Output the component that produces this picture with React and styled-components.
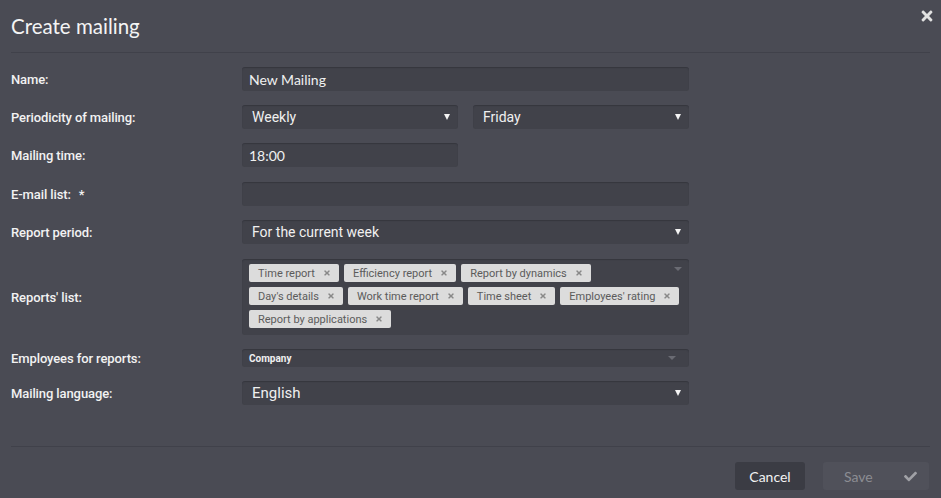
import React from 'react'
import styled, { createGlobalStyle } from 'styled-components'
import { FaTimes, FaCheck } from 'react-icons/fa'

const GlobalStyle = createGlobalStyle`
  html, body {
    margin: 0;
    padding: 0;
    background: #4a4b54;
  }
`

const Modal = styled.div`
  width: 941px;
  height: 498px;
  box-sizing: border-box;
  background: #4a4b54;
  color: #f0f0f0;
  font-family: Roboto, "Liberation Sans", sans-serif;
  padding: 0 11px;
  display: flex;
  flex-direction: column;
  position: relative;
`

const Header = styled.div`
  height: 52px;
  border-bottom: 1px solid #40414a;
  display: flex;
  align-items: center;
`

const Title = styled.h2`
  margin: 0;
  font-family: Lato, "Liberation Sans", sans-serif;
  font-weight: 400;
  font-size: 20.5px;
  color: #f4f4f4;
`

const Close = styled.button`
  position: absolute;
  top: 8px;
  right: 6px;
  background: none;
  border: none;
  padding: 0;
  color: #e2e2e2;
  font-size: 16px;
  display: flex;
`

const Form = styled.div`
  padding-top: 14px;
  display: flex;
  flex-direction: column;
  gap: 14px;
  flex: 1;
  border-bottom: 1px solid #40414a;
`

const Row = styled.div`
  display: grid;
  grid-template-columns: 231px 447px;
  align-items: center;
  margin-top: ${p => p.$mt || 0}px;
`

const Label = styled.div`
  font-size: 13px;
  font-weight: 500;
  color: #f2f2f2;
  letter-spacing: -0.1px;
`

const Star = styled.span`
  margin-left: 8px;
`

const Field = styled.div`
  box-sizing: border-box;
  height: ${p => p.$h || 24}px;
  width: ${p => (p.$w ? `${p.$w}px` : '100%')};
  background: #41424a;
  border-radius: 3px;
  box-shadow: inset 0 1px 1px #36373e;
  display: flex;
  align-items: center;
  padding: 0 7px 0 ${p => p.$pl || 7}px;
  font-family: ${p => (p.$lato ? 'Lato, "Liberation Sans", sans-serif' : 'Roboto, "Liberation Sans", sans-serif')};
  font-size: ${p => p.$fs || 14}px;
  font-weight: ${p => p.$fw || 400};
  color: #f0f0f0;
`

const Value = styled.span`
  flex: 1;
`

const Arrow = styled.span`
  width: 0;
  height: 0;
  border-left: 3.5px solid transparent;
  border-right: 3.5px solid transparent;
  border-top: 6px solid #f4f4f4;
  margin-right: 1px;
`

const DimArrow = styled.span`
  width: 0;
  height: 0;
  border-left: 4px solid transparent;
  border-right: 4px solid transparent;
  border-top: 4px solid #6a6b73;
  margin-right: 6px;
  ${p => p.$over && `
    position: absolute;
    top: 8px;
    right: 7px;
    margin: 0;
  `}
`

const Pair = styled.div`
  display: flex;
  gap: 15px;
`

const TagBox = styled.div`
  position: relative;
  box-sizing: border-box;
  height: 76px;
  background: #41424a;
  border-radius: 3px;
  box-shadow: inset 0 1px 1px #36373e;
  padding: 5px 7px 0 7px;
`

const Tags = styled.div`
  display: flex;
  flex-wrap: wrap;
  align-content: flex-start;
  column-gap: 5px;
  row-gap: 5px;
`

const Tag = styled.span`
  box-sizing: border-box;
  height: 18px;
  display: inline-flex;
  align-items: center;
  gap: 8px;
  padding: 0 8px 0 9px;
  background: #dcdcdc;
  border-radius: 2px;
  color: #5b5b5b;
  font-size: 11px;
  white-space: nowrap;
`

const TagX = styled(FaTimes)`
  font-size: 8px;
  color: #888;
`

const Footer = styled.div`
  height: 51px;
  box-sizing: border-box;
  display: flex;
  justify-content: flex-end;
  align-items: flex-start;
  padding: 15px 1px 0 0;
  gap: 18px;
`

const Button = styled.button`
  box-sizing: border-box;
  height: 28px;
  width: ${p => p.$w}px;
  border: none;
  border-radius: 3px;
  background: ${p => (p.$disabled ? '#50515a' : '#3b3c44')};
  color: ${p => (p.$disabled ? '#8c8d93' : '#f2f2f2')};
  font-family: Lato, "Liberation Sans", sans-serif;
  font-size: 14px;
  display: flex;
  align-items: center;
  justify-content: ${p => (p.$disabled ? 'space-between' : 'center')};
  padding: ${p => (p.$disabled ? '0 12px 0 21px' : '0')};
`

const Check = styled(FaCheck)`
  font-size: 13px;
  color: #a0a1a6;
`

const reports = [
  'Time report',
  'Efficiency report',
  'Report by dynamics',
  "Day's details",
  'Work time report',
  'Time sheet',
  "Employees' rating",
  'Report by applications'
]

export default function App () {
  return (
    <>
      <GlobalStyle />
      <Modal>
        <Header>
          <Title>Create mailing</Title>
        </Header>
        <Close><FaTimes /></Close>
        <Form>
          <Row>
            <Label>Name:</Label>
            <Field $lato><Value>New Mailing</Value></Field>
          </Row>
          <Row>
            <Label>Periodicity of mailing:</Label>
            <Pair>
              <Field $w={216} $pl={10}><Value>Weekly</Value><Arrow /></Field>
              <Field $w={216} $pl={10}><Value>Friday</Value><Arrow /></Field>
            </Pair>
          </Row>
          <Row>
            <Label>Mailing time:</Label>
            <Field $w={216} $lato><Value>18:00</Value></Field>
          </Row>
          <Row $mt={1}>
            <Label>E-mail list:<Star>*</Star></Label>
            <Field />
          </Row>
          <Row>
            <Label>Report period:</Label>
            <Field $pl={10}><Value>For the current week</Value><Arrow /></Field>
          </Row>
          <Row $mt={1}>
            <Label>Reports' list:</Label>
            <TagBox>
              <Tags>
                {reports.map(r => (
                  <Tag key={r}>{r}<TagX /></Tag>
                ))}
              </Tags>
              <DimArrow $over />
            </TagBox>
          </Row>
          <Row>
            <Label>Employees for reports:</Label>
            <Field $h={18} $fs={10} $fw={700}><Value>Company</Value><DimArrow /></Field>
          </Row>
          <Row>
            <Label>Mailing language:</Label>
            <Field $fs={15} $pl={10}><Value>English</Value><Arrow /></Field>
          </Row>
        </Form>
        <Footer>
          <Button $w={70}>Cancel</Button>
          <Button $w={106} $disabled>Save<Check /></Button>
        </Footer>
      </Modal>
    </>
  )
}
